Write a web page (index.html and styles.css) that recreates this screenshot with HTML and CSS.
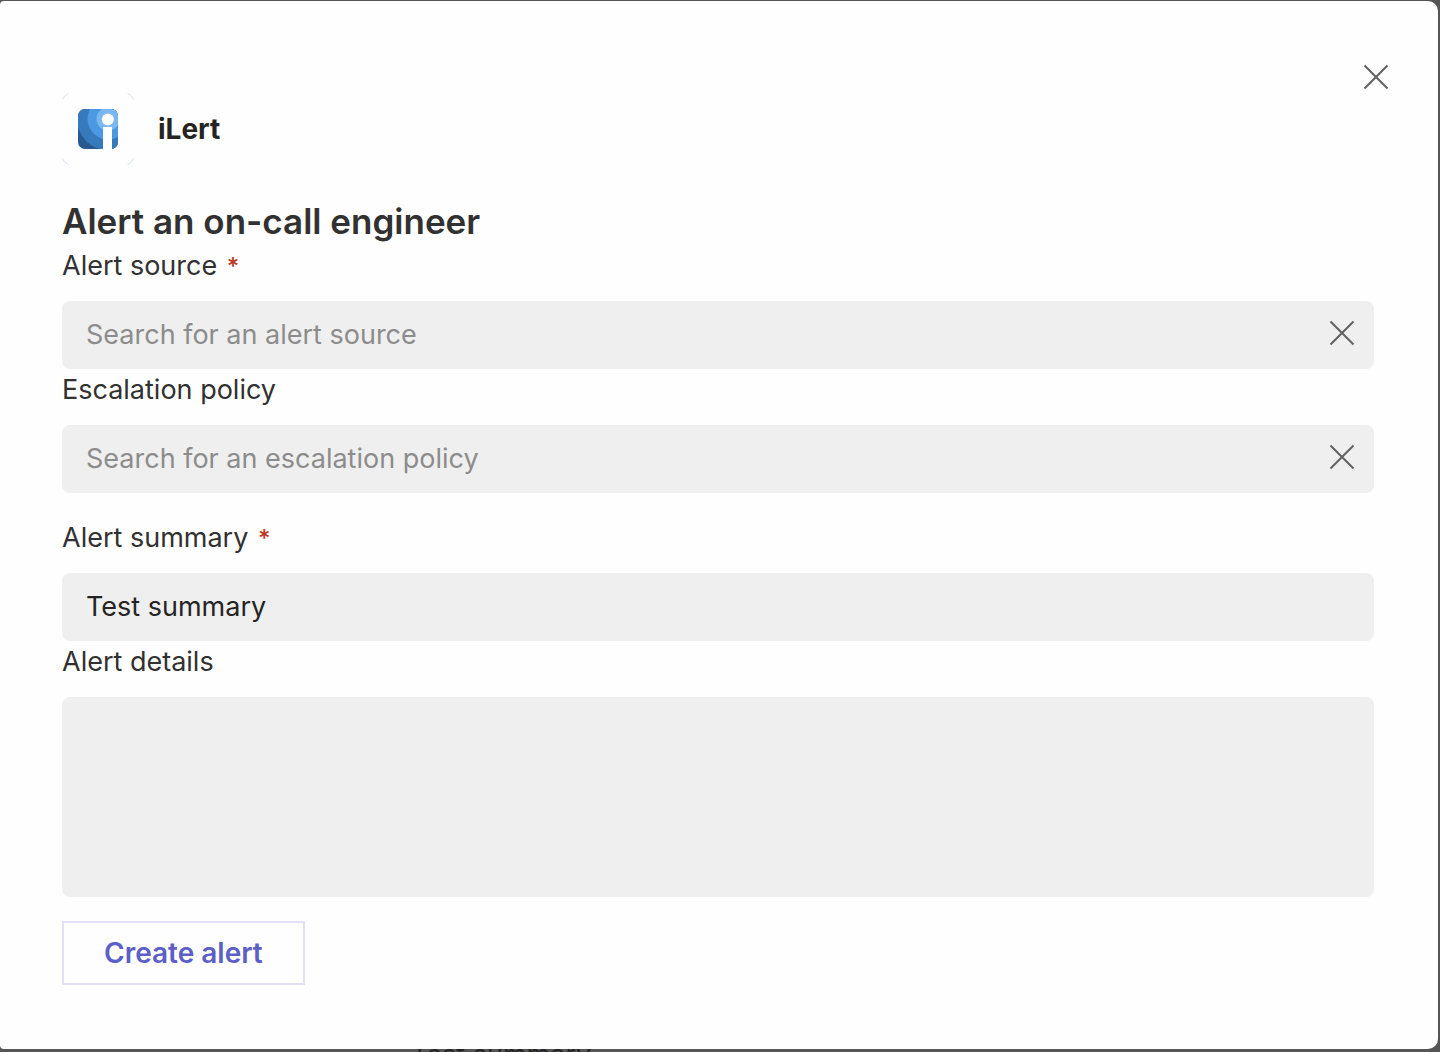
FILE: index.html
```html
<!DOCTYPE html>
<html lang="en">
<head>
<meta charset="utf-8">
<meta name="viewport" content="width=device-width, initial-scale=1">
<title>iLert</title>
<link rel="stylesheet" href="styles.css">
</head>
<body>
<div class="backdrop">
  <p class="behind">Test summary</p>
  <main class="dialog" role="dialog" aria-labelledby="dialog-title">
    <button class="icon-button close" type="button" aria-label="Close">
      <svg class="cross" viewBox="0 0 26 26" aria-hidden="true"><path d="M1.500 1.500l23 23M24.500 1.500l-23 23"/></svg>
    </button>
    <header class="app">
      <svg class="logo" viewBox="0 0 72 72" aria-hidden="true">
        <defs><clipPath id="tile"><rect x="16" y="16" width="40" height="40" rx="7"/></clipPath></defs>
        <path class="corners" d="M.5 6.500Q2 2 6.500.5M65.500.5Q70 2 71.500 6.500M71.500 65.500Q70 70 65.500 71.500M6.500 71.500Q2 70 .5 65.500"/>
        <g clip-path="url(#tile)">
          <rect x="16" y="16" width="40" height="40" fill="#28598f"/>
          <circle cx="46" cy="26" r="31" fill="#3779bd"/>
          <circle cx="46" cy="26" r="20.500" fill="#4c98e2"/>
          <circle cx="46" cy="26" r="11.500" fill="#7ab7f0"/>
          <path d="M41 34h9v23h-9z" fill="#fff"/>
          <circle cx="45.800" cy="26.500" r="6" fill="#fff"/>
        </g>
      </svg>
      <span class="app-name">iLert</span>
    </header>
    <form class="form">
      <h1 class="title" id="dialog-title">Alert an on-call engineer</h1>
      <div class="group">
        <label class="label" for="source">Alert source <span class="required">*</span></label>
        <div class="field">
          <input class="input" id="source" type="text" placeholder="Search for an alert source">
          <button class="icon-button" type="button" aria-label="Clear alert source">
            <svg class="cross" viewBox="0 0 26 26" aria-hidden="true"><path d="M1.500 1.500l23 23M24.500 1.500l-23 23"/></svg>
          </button>
        </div>
        <label class="label" for="policy">Escalation policy</label>
        <div class="field">
          <input class="input" id="policy" type="text" placeholder="Search for an escalation policy">
          <button class="icon-button" type="button" aria-label="Clear escalation policy">
            <svg class="cross" viewBox="0 0 26 26" aria-hidden="true"><path d="M1.500 1.500l23 23M24.500 1.500l-23 23"/></svg>
          </button>
        </div>
      </div>
      <div class="group">
        <label class="label" for="summary">Alert summary <span class="required">*</span></label>
        <div class="field">
          <input class="input" id="summary" type="text" value="Test summary">
        </div>
        <label class="label" for="details">Alert details</label>
        <textarea class="textarea" id="details"></textarea>
      </div>
      <button class="submit" type="submit">Create alert</button>
    </form>
  </main>
</div>
</body>
</html>
```
FILE: styles.css
```css
* {
  box-sizing: border-box;
}

body {
  margin: 0;
  background: #555;
  color: #323131;
  font-family: Inter, "Liberation Sans", sans-serif;
  font-size: 27px;
  line-height: 42px;
}

.backdrop {
  position: relative;
  min-height: 100vh;
  padding: 1px 2px 3px 0;
  overflow: hidden;
}

.behind {
  position: absolute;
  bottom: -24px;
  left: 416px;
  margin: 0 -5px;
  color: #252423;
}

.dialog {
  position: relative;
  padding: 92px 64px 64px 62px;
  border-radius: 4px 10px 10px 4px;
  background: #fefefe;
}

.app {
  display: flex;
  align-items: center;
  gap: 24px;
  margin-bottom: 32px;
}

.logo {
  width: 72px;
  height: 72px;
}

.corners {
  fill: none;
  stroke: #d3e6f8;
}

.app-name {
  color: #252423;
  font-size: 28px;
  font-weight: 700;
}

.form {
  display: flex;
  flex-direction: column;
  gap: 24px;
}

.title {
  margin: 0 0 -24px;
  font-size: 35px;
  font-weight: 600;
  line-height: 48px;
}

.group {
  display: flex;
  flex-direction: column;
}

.label {
  margin-bottom: 14px;
}

.required {
  margin-left: 2px;
  color: #b93a1b;
  font-size: 24px;
  font-weight: 500;
  line-height: 1;
}

.field {
  display: flex;
  align-items: center;
  height: 68px;
  padding: 0 16px 4px 0;
  border-radius: 8px;
  background: #efefef;
}

.input {
  flex: 1;
  min-width: 0;
  height: 100%;
  padding: 2px 24px 0;
  border: 0;
  background: transparent;
  color: #252423;
  font: inherit;
  outline: 0;
}

.input::placeholder {
  color: #8c8c8c;
  opacity: 1;
}

.textarea {
  height: 200px;
  padding: 16px 24px;
  border: 0;
  border-radius: 8px;
  background: #efefef;
  color: #252423;
  font: inherit;
  resize: none;
}

.icon-button {
  display: flex;
  padding: 3px;
  border: 0;
  background: transparent;
  cursor: pointer;
}

.close {
  position: absolute;
  top: 60px;
  right: 46px;
}

.cross {
  width: 26px;
  height: 26px;
  fill: none;
  stroke: #616161;
  stroke-width: 2;
}

.submit {
  align-self: flex-start;
  height: 64px;
  padding: 0 40px;
  border: 2px solid #e2e0f4;
  background: transparent;
  color: #5b5fc7;
  font: inherit;
  font-size: 28px;
  font-weight: 600;
  cursor: pointer;
}
```
